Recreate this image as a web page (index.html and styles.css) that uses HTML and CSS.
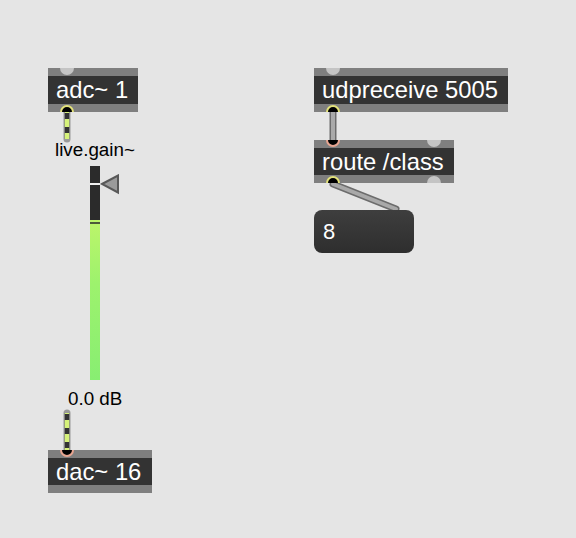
FILE: index.html
```html
<!DOCTYPE html>
<html>
<head>
<meta charset="utf-8">
<link rel="stylesheet" href="styles.css">
</head>
<body>
<div class="patch">
  <svg class="cords" width="576" height="538" viewBox="0 0 576 538">
    <g class="sig">
      <line class="sig-edge" x1="67" y1="112" x2="67" y2="139"/>
      <line class="sig-core" x1="67" y1="112" x2="67" y2="139"/>
      <line class="sig-dash" x1="67" y1="112" x2="67" y2="139"/>
      <line class="sig-edge" x1="67" y1="413" x2="67" y2="450"/>
      <line class="sig-core" x1="67" y1="413" x2="67" y2="450"/>
      <line class="sig-dash" x1="67" y1="413" x2="67" y2="450"/>
    </g>
    <g class="ctl">
      <line class="ctl-edge" x1="333" y1="112" x2="333" y2="140"/>
      <line class="ctl-core" x1="333" y1="112" x2="333" y2="140"/>
      <line class="ctl-edge" x1="333" y1="184" x2="396" y2="209"/>
      <line class="ctl-core" x1="333" y1="184" x2="396" y2="209"/>
    </g>
  </svg>

  <div class="obj adc">
    <span class="port in-l"></span>
    <span class="label">adc~ 1</span>
    <span class="port out-l sig-on"></span>
  </div>

  <div class="obj udp">
    <span class="port in-l"></span>
    <span class="label">udpreceive 5005</span>
    <span class="port out-l ctl-on"></span>
  </div>

  <div class="obj route">
    <span class="port in-l in-on"></span>
    <span class="port in-r"></span>
    <span class="label">route /class</span>
    <span class="port out-l ctl-on"></span>
    <span class="port out-r"></span>
  </div>

  <div class="numbox"><span class="num">8</span></div>

  <div class="gain">
    <div class="gain-name">live.gain~</div>
    <div class="meter">
      <div class="meter-dark"><span class="meter-mark"></span></div>
      <div class="meter-green"><span class="meter-line"></span></div>
    </div>
    <svg class="pointer" width="20" height="22" viewBox="0 0 20 22">
      <polygon points="2,10 18,1.5 18,18.5" fill="#9b9b9b" stroke="#595959" stroke-width="2" stroke-linejoin="miter"/>
    </svg>
    <div class="gain-value">0.0 dB</div>
  </div>

  <div class="obj dac">
    <span class="port in-l sig-in-on"></span>
    <span class="label">dac~ 16</span>
  </div>
</div>
</body>
</html>
```

FILE: styles.css
```css
html, body {
  margin: 0;
  padding: 0;
  background: #e5e5e5;
}

.patch {
  position: relative;
  width: 576px;
  height: 538px;
  overflow: hidden;
  background: #e5e5e5;
  font-family: "Liberation Sans", Arial, sans-serif;
}

.cords {
  position: absolute;
  left: 0;
  top: 0;
  z-index: 0;
}

.sig-edge { stroke: #9a9a9a; stroke-width: 7; stroke-linecap: round; }
.sig-core { stroke: #333333; stroke-width: 4.5; stroke-linecap: butt; }
.sig-dash { stroke: #d6f27a; stroke-width: 4.5; stroke-dasharray: 8 6; stroke-dashoffset: -7; }

.ctl-edge { stroke: #6c6c6c; stroke-width: 7; stroke-linecap: round; }
.ctl-core { stroke: #a9a9a9; stroke-width: 4; stroke-linecap: round; }

.obj {
  position: absolute;
  z-index: 1;
  overflow: hidden;
  box-sizing: border-box;
  height: 44px;
  padding: 8px 0 8px 8px;
  background: linear-gradient(#7f7f7f 0 8px, #333333 8px calc(100% - 8px), #7f7f7f calc(100% - 8px));
  display: flex;
  align-items: center;
}

.label {
  color: #ffffff;
  font-size: 23.8px;
  line-height: 28px;
  white-space: nowrap;
  position: relative;
}

.adc   { left: 48px;  top: 68px;  width: 90px; }
.udp   { left: 314px; top: 68px;  width: 194px; }
.route { left: 314px; top: 140px; width: 140px; height: 43px; }
.dac   { left: 48px;  top: 450px; width: 104px; height: 43px; }

.port {
  position: absolute;
  width: 14px;
  height: 14px;
  border-radius: 50%;
  background: #c4c4c4;
  box-sizing: border-box;
}
.in-l  { left: 12px; top: -7px; }
.in-r  { right: 13px; top: -7px; }
.out-l { left: 12px; bottom: -7px; }
.out-r { right: 13px; bottom: -7px; }

.sig-on, .ctl-on {
  background: #000000;
  border: 2px solid #e3e27a;
}
.in-on, .sig-in-on {
  background: #000000;
  border: 2px solid #e8a591;
}

.numbox {
  position: absolute;
  z-index: 1;
  left: 314px;
  top: 210px;
  width: 100px;
  height: 43px;
  box-sizing: border-box;
  border-radius: 8px;
  background: linear-gradient(#3e3e3e, #2e2e2e);
  display: flex;
  align-items: center;
  padding-left: 9px;
}
.num {
  color: #ffffff;
  font-size: 22px;
  line-height: 26px;
}

.gain {
  position: absolute;
  z-index: 1;
  left: 54px;
  top: 140px;
  width: 90px;
  height: 272px;
}
.gain-name {
  position: absolute;
  left: 1px;
  top: 0;
  font-size: 18.8px;
  line-height: 20px;
  color: #000000;
  white-space: nowrap;
}
.meter {
  position: absolute;
  left: 36px;
  top: 26px;
  width: 10px;
  height: 214px;
  display: flex;
  flex-direction: column;
}
.meter-dark {
  position: relative;
  height: 54px;
  background: #2b2b2b;
}
.meter-mark {
  position: absolute;
  left: 0;
  right: 0;
  top: 17px;
  height: 2px;
  background: #f0f0f0;
}
.meter-green {
  position: relative;
  flex: 1;
  background: linear-gradient(#bdf56a, #9df26d 40%, #88ee72);
}
.meter-line {
  position: absolute;
  left: 0;
  right: 0;
  top: 2px;
  height: 1.5px;
  background: #4d5a3a;
}
.pointer {
  position: absolute;
  left: 46px;
  top: 34px;
}
.gain-value {
  position: absolute;
  left: 14px;
  top: 249px;
  font-size: 18.8px;
  line-height: 20px;
  color: #000000;
  white-space: nowrap;
}
```
